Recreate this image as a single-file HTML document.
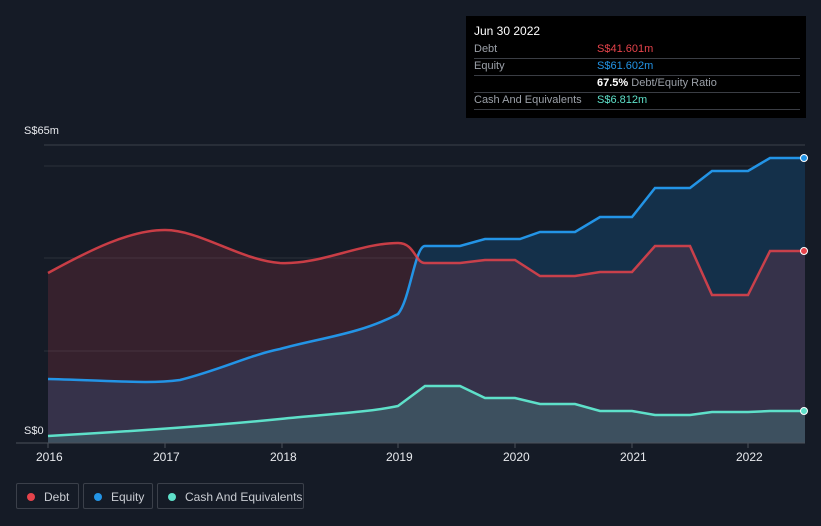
<!DOCTYPE html>
<html><head><meta charset="utf-8"><style>
body{margin:0;background:#151b26;width:821px;height:526px;overflow:hidden;font-family:"Liberation Sans",sans-serif;position:relative}
.tt{position:absolute;left:466px;top:16px;width:340px;height:102px;background:#000;color:#fff;font-size:11px}
.row{position:absolute;left:8px;right:6px;height:17px;border-bottom:1px solid #3a3d44;line-height:17px;color:#9ba0a8}
.row span{position:absolute;left:123px}
.leg{position:absolute;top:483px;height:26px;border:1px solid #3b404a;border-radius:2px;color:#c9ccd2;font-size:12px;line-height:26px;box-sizing:border-box;padding-left:27px}
.leg i{position:absolute;left:10px;top:9px;width:8px;height:8px;border-radius:50%}
.ax{position:absolute;top:450px;color:#e8eaee;font-size:12px}
</style></head><body>
<svg width="821" height="526" style="position:absolute;left:0;top:0">
<g stroke="#2a303b" stroke-width="1"><line x1="44" y1="166" x2="805" y2="166"/><line x1="44" y1="258" x2="805" y2="258"/><line x1="44" y1="351" x2="805" y2="351"/></g>
<line x1="44" y1="145" x2="805" y2="145" stroke="#3a404a"/>
<path d="M48,379 C120,381 150,384 180,380 C220,370 250,355 280,349 C320,338 360,334 398,314 C410,300 415,246 425,246 L460,246 L485,239 L520,239 L540,232 L575,232 L600,217 L632,217 L655,188 L690,188 L712,171 L748,171 L770,158 L805,158 L805,443 L48,443Z" fill="#14304a"/>
<path d="M48,273 C90,250 130,230 165,230 C200,230 240,260 280,263 C320,265 360,243 398,243 C415,243 415,263 425,263 L460,263 L485,260 L515,260 L540,276 L575,276 L600,272 L632,272 L655,246 L690,246 L712,295 L748,295 L770,251 L805,251 L805,443 L48,443Z" fill="rgba(190,60,75,0.2)"/>
<path d="M48,436 C120,432 200,427 280,419 C330,414 370,412 398,406 L425,386 L460,386 L485,398 L515,398 L540,404 L575,404 L600,411 L632,411 L655,415 L690,415 L712,412 L748,412 L770,411 L805,411 L805,443 L48,443Z" fill="rgba(90,200,180,0.2)"/>
<path d="M48,379 C120,381 150,384 180,380 C220,370 250,355 280,349 C320,338 360,334 398,314 C410,300 415,246 425,246 L460,246 L485,239 L520,239 L540,232 L575,232 L600,217 L632,217 L655,188 L690,188 L712,171 L748,171 L770,158 L805,158" fill="none" stroke="#2394e6" stroke-width="2.5"/>
<path d="M48,273 C90,250 130,230 165,230 C200,230 240,260 280,263 C320,265 360,243 398,243 C415,243 415,263 425,263 L460,263 L485,260 L515,260 L540,276 L575,276 L600,272 L632,272 L655,246 L690,246 L712,295 L748,295 L770,251 L805,251" fill="none" stroke="#e5434b" stroke-width="2.5" stroke-opacity=".85"/>
<path d="M48,436 C120,432 200,427 280,419 C330,414 370,412 398,406 L425,386 L460,386 L485,398 L515,398 L540,404 L575,404 L600,411 L632,411 L655,415 L690,415 L712,412 L748,412 L770,411 L805,411" fill="none" stroke="#5ee0c9" stroke-width="2.5"/>
<circle cx="804" cy="158" r="3.5" fill="#2394e6" stroke="#fff" stroke-width="1"/>
<circle cx="804" cy="251" r="3.5" fill="#e5434b" stroke="#fff" stroke-width="1"/>
<circle cx="804" cy="411" r="3.5" fill="#5ee0c9" stroke="#fff" stroke-width="1"/>
<line x1="16" y1="443" x2="805" y2="443" stroke="#4a505a"/>
<rect x="17" y="421" width="30" height="18" fill="#151b26"/>
<g stroke="#4a505a"><line x1="48" y1="443" x2="48" y2="448"/><line x1="165" y1="443" x2="165" y2="448"/><line x1="282" y1="443" x2="282" y2="448"/><line x1="398" y1="443" x2="398" y2="448"/><line x1="515" y1="443" x2="515" y2="448"/><line x1="632" y1="443" x2="632" y2="448"/><line x1="748" y1="443" x2="748" y2="448"/></g>
</svg>
<div style="position:absolute;left:24px;top:125px;color:#e8eaee;font-size:11px">S$65m</div>
<div style="position:absolute;left:24px;top:425px;color:#e8eaee;font-size:11px">S$0</div>
<div class="ax" style="left:36px">2016</div><div class="ax" style="left:153px">2017</div><div class="ax" style="left:270px">2018</div><div class="ax" style="left:386px">2019</div><div class="ax" style="left:503px">2020</div><div class="ax" style="left:620px">2021</div><div class="ax" style="left:736px">2022</div>
<div class="tt">
<div style="position:absolute;left:8px;top:8px;font-size:12px">Jun 30 2022</div>
<div class="row" style="top:25px">Debt<span style="color:#e5434b">S$41.601m</span></div>
<div class="row" style="top:42px">Equity<span style="color:#2394e6">S$61.602m</span></div>
<div class="row" style="top:59px"><span><b style="color:#fff">67.5%</b> Debt/Equity Ratio</span></div>
<div class="row" style="top:76px">Cash And Equivalents<span style="color:#5ee0c9">S$6.812m</span></div>
</div>
<div class="leg" style="left:16px;width:63px"><i style="background:#e5434b"></i>Debt</div>
<div class="leg" style="left:83px;width:70px"><i style="background:#2394e6"></i>Equity</div>
<div class="leg" style="left:157px;width:147px"><i style="background:#5ee0c9"></i>Cash And Equivalents</div>
</body></html>
